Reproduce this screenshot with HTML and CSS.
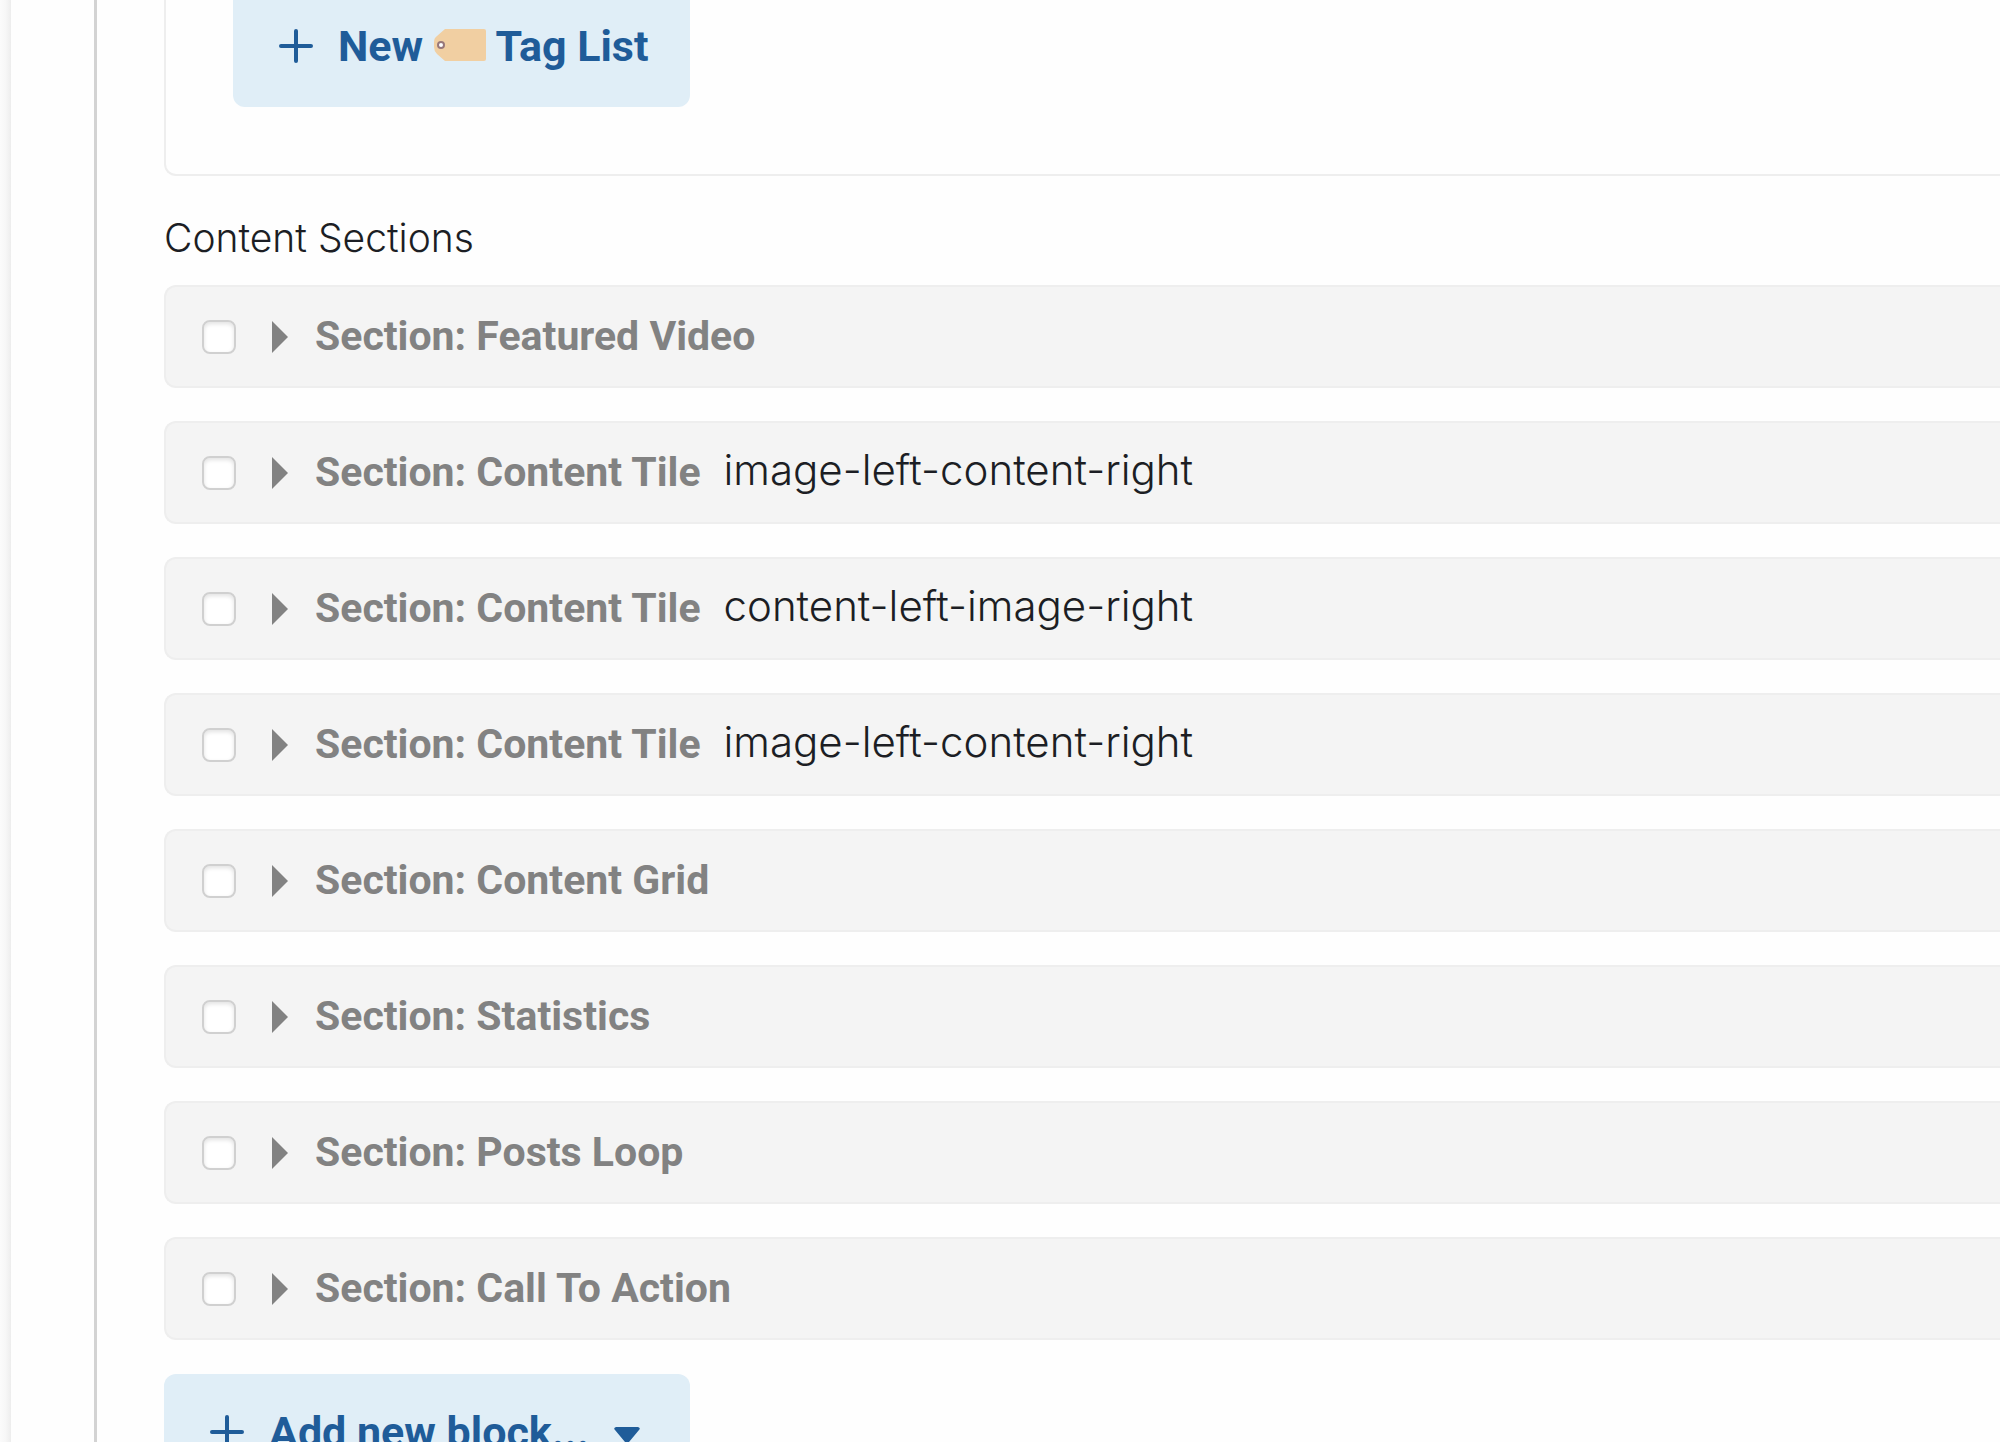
FILE: index.html
```html
<!DOCTYPE html>
<html lang="en">
<head>
<meta charset="utf-8">
<title>Content Sections</title>
<link rel="stylesheet" href="styles.css">
</head>
<body>
<div class="shell">
  <div class="gutter"></div>
  <main class="pane">
    <div class="fields">
      <div class="panel">
        <button type="button" class="btn">
          <svg class="plus" viewBox="0 0 34 34" aria-hidden="true"><path d="M17 2V32M2 17H32"/></svg>
          <span class="btn-label">New
            <svg class="tag" viewBox="0 0 52 34" aria-hidden="true"><path class="tag-body" d="M11 1H50Q52 1 52 3V31Q52 33 50 33H11L3 26Q0 23 0 19V14Q0 10 3 8Z"/><circle class="tag-hole" cx="7" cy="17" r="3"/></svg>
            Tag List</span>
        </button>
      </div>
      <h2 class="heading">Content Sections</h2>
      <ul class="blocks">
        <li class="block"><input type="checkbox" class="check" id="b1"><svg class="arrow" viewBox="0 0 16 32" aria-hidden="true"><path d="M0 0L16 16L0 32Z"/></svg><label class="name" for="b1">Section: Featured Video</label></li>
        <li class="block"><input type="checkbox" class="check" id="b2"><svg class="arrow" viewBox="0 0 16 32" aria-hidden="true"><path d="M0 0L16 16L0 32Z"/></svg><label class="name" for="b2">Section: Content Tile</label><span class="preview">image-left-content-right</span></li>
        <li class="block"><input type="checkbox" class="check" id="b3"><svg class="arrow" viewBox="0 0 16 32" aria-hidden="true"><path d="M0 0L16 16L0 32Z"/></svg><label class="name" for="b3">Section: Content Tile</label><span class="preview">content-left-image-right</span></li>
        <li class="block"><input type="checkbox" class="check" id="b4"><svg class="arrow" viewBox="0 0 16 32" aria-hidden="true"><path d="M0 0L16 16L0 32Z"/></svg><label class="name" for="b4">Section: Content Tile</label><span class="preview">image-left-content-right</span></li>
        <li class="block"><input type="checkbox" class="check" id="b5"><svg class="arrow" viewBox="0 0 16 32" aria-hidden="true"><path d="M0 0L16 16L0 32Z"/></svg><label class="name" for="b5">Section: Content Grid</label></li>
        <li class="block"><input type="checkbox" class="check" id="b6"><svg class="arrow" viewBox="0 0 16 32" aria-hidden="true"><path d="M0 0L16 16L0 32Z"/></svg><label class="name" for="b6">Section: Statistics</label></li>
        <li class="block"><input type="checkbox" class="check" id="b7"><svg class="arrow" viewBox="0 0 16 32" aria-hidden="true"><path d="M0 0L16 16L0 32Z"/></svg><label class="name" for="b7">Section: Posts Loop</label></li>
        <li class="block"><input type="checkbox" class="check" id="b8"><svg class="arrow" viewBox="0 0 16 32" aria-hidden="true"><path d="M0 0L16 16L0 32Z"/></svg><label class="name" for="b8">Section: Call To Action</label></li>
      </ul>
      <button type="button" class="btn">
        <svg class="plus" viewBox="0 0 34 34" aria-hidden="true"><path d="M17 2V32M2 17H32"/></svg>
        <span class="btn-label">Add new block...</span>
        <svg class="caret" viewBox="0 0 26 16" aria-hidden="true"><path d="M2 0H24Q27 1 25 3L15 15Q13 17 11 15L1 3Q-1 1 2 0Z"/></svg>
      </button>
    </div>
  </main>
</div>
</body>
</html>
```
FILE: styles.css
```css
* { box-sizing: border-box; }

body {
  margin: 0;
  background: #fefefe;
  color: #1c1e24;
  font-family: Roboto, "Liberation Sans", sans-serif;
  font-size: 41px;
  line-height: 48px;
}

.shell {
  display: flex;
  height: 100vh;
  overflow: hidden;
}

.gutter {
  flex: none;
  width: 11px;
  background: linear-gradient(to right, #fbfbfb, #f7f7f7 50%, #ededed);
}

.pane {
  flex: 1;
  min-width: 0;
  padding-left: 83px;
}

.fields {
  margin-top: -12px;
  padding-left: 67px;
  border-left: 3px solid #d3d3d3;
}

.panel {
  padding: 0 67px 67px;
  border: 2px solid #eee;
  border-width: 0 0 2px 2px;
  border-bottom-left-radius: 12px;
}

.btn {
  display: inline-flex;
  align-items: center;
  height: 119px;
  padding: 0 42px 3px 46px;
  border: 0;
  border-radius: 12px;
  background: #e0eef7;
  color: #1f5c99;
  font: inherit;
  font-size: 43px;
  font-weight: 700;
  vertical-align: top;
}

.btn-label {
  margin-left: 25px;
  white-space: nowrap;
}

.plus {
  width: 34px;
  height: 34px;
  fill: none;
  stroke: #1f5c99;
  stroke-width: 4;
  stroke-linecap: round;
}

.tag {
  width: 52px;
  height: 34px;
  vertical-align: -1px;
}

.tag-body { fill: #f1cfa2; }

.tag-hole {
  fill: #fff;
  stroke: #97777a;
  stroke-width: 2;
}

.caret {
  width: 26px;
  height: 16px;
  margin: 6px 8px 0 25px;
  fill: #1f5c99;
}

.heading {
  margin: 38px 0 23px;
  font-family: Inter, sans-serif;
  font-size: 39px;
  font-weight: 300;
}

.blocks {
  display: grid;
  gap: 33px;
  margin: 0 0 34px;
  padding: 0;
  list-style: none;
}

.block {
  display: flex;
  align-items: center;
  height: 103px;
  padding-left: 36px;
  border: 2px solid #eee;
  border-right: 0;
  border-radius: 12px 0 0 12px;
  background: #f4f4f4;
}

.check {
  appearance: none;
  width: 34px;
  height: 34px;
  margin: 0;
  border: 2px solid #d0d0d0;
  border-radius: 8px;
  background: #fff;
  box-shadow: inset 0 2px 4px #e2e2e2;
}

.arrow {
  width: 16px;
  height: 32px;
  margin: 0 27px 0 36px;
  fill: #828282;
}

.name {
  padding-bottom: 2px;
  color: #828282;
  font-weight: 700;
}

.preview {
  margin-left: 23px;
  padding-bottom: 6px;
  font-family: Inter, sans-serif;
  font-size: 42px;
  font-weight: 300;
}
```
